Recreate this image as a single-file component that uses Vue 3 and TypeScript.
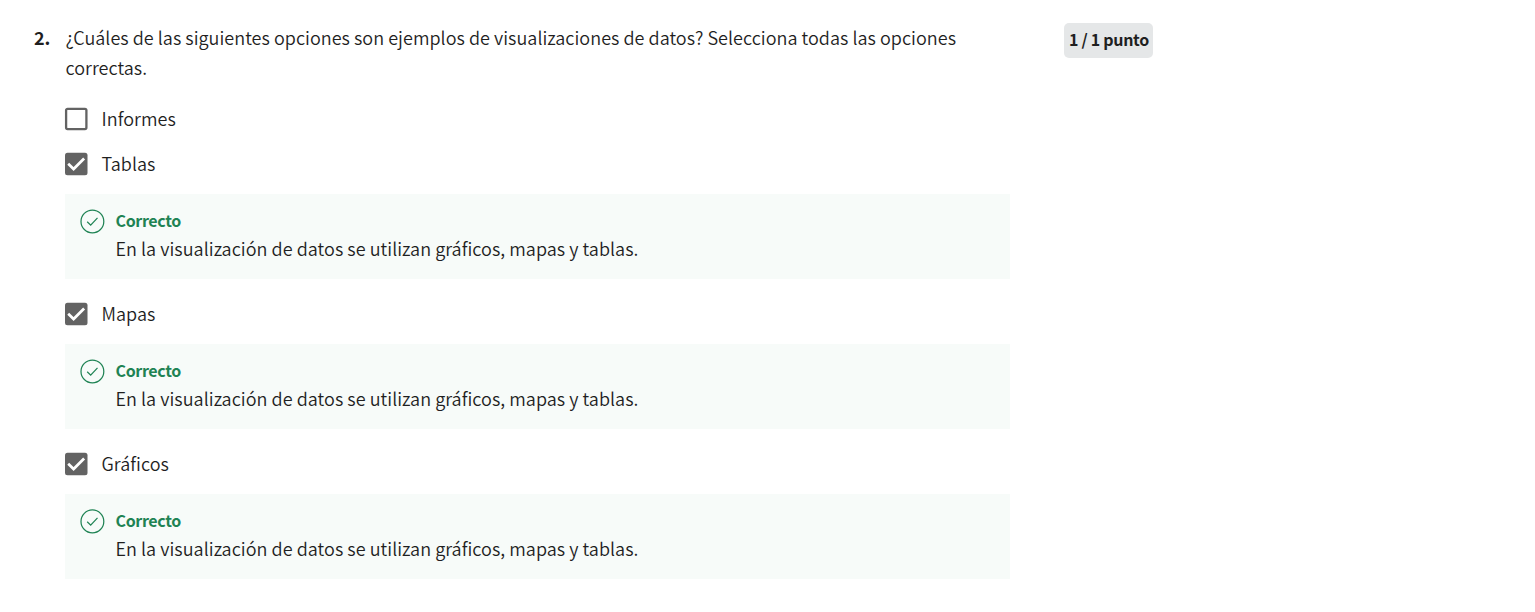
<script setup lang="ts">
interface Option {
  label: string
  checked: boolean
  feedback?: string
}

const explanation = 'En la visualización de datos se utilizan gráficos, mapas y tablas.'

const options: Option[] = [
  { label: 'Informes', checked: false },
  { label: 'Tablas', checked: true, feedback: explanation },
  { label: 'Mapas', checked: true, feedback: explanation },
  { label: 'Gráficos', checked: true, feedback: explanation },
]
</script>

<template>
  <main class="question">
    <div class="number">2.</div>
    <div class="content">
      <p class="prompt">
        <span class="line">¿Cuáles de las siguientes opciones son ejemplos de visualizaciones de datos? Selecciona todas las opciones</span>
        <span class="line">correctas.</span>
      </p>
      <div v-for="option in options" :key="option.label" class="option">
        <label class="choice">
          <svg class="box" viewBox="0 0 24 24">
            <template v-if="option.checked">
              <rect x="1" y="0.8" width="22.5" height="22.5" rx="2.5" fill="#636363" />
              <path d="M4.2 11.8 9.6 17 20.1 6.5" fill="none" stroke="#fff" stroke-width="2.7" />
            </template>
            <rect v-else x="2.1" y="1.8" width="20.3" height="20.3" rx="1.5" fill="#fff" stroke="#636363" stroke-width="2.3" />
          </svg>
          <span class="label">{{ option.label }}</span>
        </label>
        <div v-if="option.feedback" class="feedback">
          <svg class="status" viewBox="0 0 26 26" fill="none" stroke="#1f8354">
            <circle cx="13.4" cy="13.4" r="11.4" stroke-width="1.25" />
            <path d="M8.2 13.7 11.7 17.2 18.5 9.8" stroke-width="1.25" />
          </svg>
          <div class="message">
            <strong class="verdict">Correcto</strong>
            <span class="explanation">{{ option.feedback }}</span>
          </div>
        </div>
      </div>
    </div>
    <div class="score">1 / 1 punto</div>
  </main>
</template>

<style>
body {
  background: #fff;
}
</style>

<style scoped>
.question {
  display: flex;
  align-items: flex-start;
  box-sizing: border-box;
  height: 612px;
  padding: 23px 0 0 33px;
  overflow: hidden;
  color: #1f1f1f;
  font-family: "Noto Sans CJK SC", "Noto Sans", sans-serif;
  font-size: 18px;
  font-weight: 350;
  line-height: 30px;
  white-space: nowrap;
}
.number {
  flex: 0 0 31px;
  margin: -1px 0 0 1px;
  font-weight: 700;
}
.content {
  flex: 0 0 945px;
}
.prompt {
  margin: -1px 0 22px;
  padding-left: 0.5px;
  letter-spacing: 0.03px;
}
.line {
  display: block;
}
.choice {
  display: flex;
  align-items: center;
  height: 30px;
  margin-bottom: 15px;
}
.box {
  width: 24px;
  height: 24px;
  margin: 0 13.5px 0 -1px;
}
.label {
  padding-bottom: 2px;
  letter-spacing: 0.04px;
}
.feedback {
  display: flex;
  box-sizing: border-box;
  height: 85px;
  margin-bottom: 20px;
  padding: 11px 0 0 14px;
  background: #f7fbf9;
}
.status {
  flex: none;
  width: 26px;
  height: 26px;
  margin: 3px 10.5px 0 0;
}
.message {
  display: flex;
  flex-direction: column;
}
.verdict {
  height: 28px;
  color: #1f8354;
  font-size: 16px;
  font-weight: 700;
  letter-spacing: -0.35px;
}
.explanation {
  letter-spacing: 0.04px;
}
.score {
  box-sizing: border-box;
  width: 89px;
  height: 35px;
  margin-left: 54px;
  padding-left: 1px;
  border-radius: 5px;
  background: #e5e7e8;
  font-size: 16px;
  font-weight: 700;
  letter-spacing: -0.3px;
  line-height: 33px;
  text-align: center;
}
</style>
